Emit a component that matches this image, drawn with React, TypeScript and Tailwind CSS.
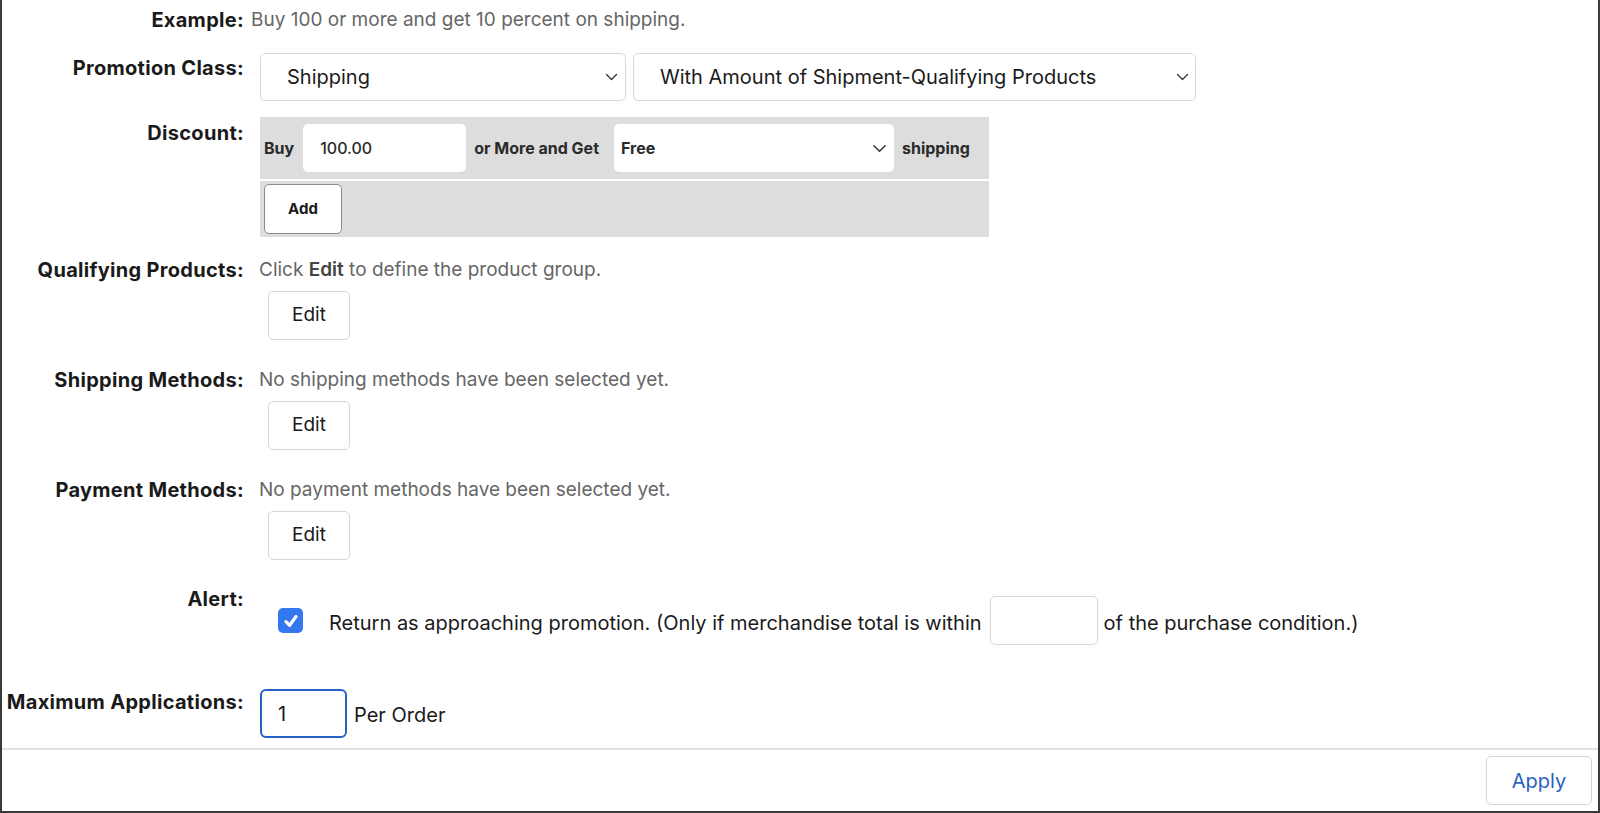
import React from 'react';

const font = { fontFamily: 'Inter, "Noto Sans", sans-serif' };

function Chevron({ className = '' }: { className?: string }) {
  return (
    <svg viewBox="0 0 12 8" className={className} fill="none" stroke="#333" strokeWidth="1.3">
      <path d="M1 1.5 L6 6.5 L11 1.5" strokeLinecap="round" strokeLinejoin="round" />
    </svg>
  );
}

function Label({ children, className = '' }: { children: React.ReactNode; className?: string }) {
  return (
    <div className={`w-[242px] shrink-0 whitespace-nowrap text-right text-[20px] font-bold leading-6 tracking-[0.3px] text-[#1a1a1a] ${className}`}>
      {children}
    </div>
  );
}

function EditButton() {
  return (
    <button className="mt-[9px] flex h-[49px] w-[82px] items-center justify-center rounded-[5px] border border-[#d6d6d6] bg-white text-[19px] text-[#1a1a1a]">
      Edit
    </button>
  );
}

export default function App() {
  return (
    <div style={font} className="flex h-[813px] w-full flex-col border-x-2 border-b-2 border-[#3a3a3a] bg-white">
      <div className="flex-1">
        {/* Example */}
        <div className="flex items-start pt-[8px]">
          <Label>Example:</Label>
          <div className="ml-[7px] text-[19px] leading-6 text-[#666]">
            Buy 100 or more and get 10 percent on shipping.
          </div>
        </div>

        {/* Promotion class */}
        <div className="mt-[21px] flex items-start">
          <Label className="pt-[3px]">Promotion Class:</Label>
          <div className="ml-[16px] flex gap-[7px]">
            <div className="flex h-[48px] w-[366px] items-center justify-between rounded-[5px] border border-[#d8d8d8] bg-white pl-[26px] pr-[7px] text-[20px] text-[#1a1a1a]">
              <span>Shipping</span>
              <Chevron className="h-[8px] w-[13px]" />
            </div>
            <div className="flex h-[48px] w-[563px] items-center justify-between rounded-[5px] border border-[#d8d8d8] bg-white pl-[26px] pr-[6px] text-[20px] text-[#1a1a1a]">
              <span>With Amount of Shipment-Qualifying Products</span>
              <Chevron className="h-[8px] w-[13px]" />
            </div>
          </div>
        </div>

        {/* Discount */}
        <div className="mt-[16px] flex items-start">
          <Label className="pt-[4px]">Discount:</Label>
          <div className="ml-[16px] w-[729px] bg-[#dddddd] text-[16px] font-bold text-[#2a2a2a]">
            <div className="flex h-[64px] items-center border-b-2 border-white pl-[4px]">
              <span>Buy</span>
              <div className="ml-[9px] flex h-[48px] w-[163px] items-center rounded-[5px] bg-white pl-[17px] font-medium">
                100.00
              </div>
              <span className="ml-[8px]">or More and Get</span>
              <div className="ml-[15px] flex h-[48px] w-[280px] items-center justify-between rounded-[5px] bg-white pl-[7px] pr-[7px]">
                <span>Free</span>
                <Chevron className="h-[9px] w-[15px]" />
              </div>
              <span className="ml-[8px]">shipping</span>
            </div>
            <div className="flex h-[56px] items-center pl-[4px]">
              <button className="flex h-[50px] w-[78px] items-center justify-center rounded-[5px] border border-[#8a8a8a] bg-white text-[15px] font-bold text-[#1a1a1a]">
                Add
              </button>
            </div>
          </div>
        </div>

        {/* Qualifying products */}
        <div className="mt-[21px] flex items-start">
          <Label>Qualifying Products:</Label>
          <div className="ml-[15px] flex flex-col items-start">
            <div className="text-[19px] leading-6 text-[#666]">
              Click <span className="font-semibold text-[#444]">Edit</span> to define the product group.
            </div>
            <div className="ml-[9px]">
              <EditButton />
            </div>
          </div>
        </div>

        {/* Shipping methods */}
        <div className="mt-[28px] flex items-start">
          <Label>Shipping Methods:</Label>
          <div className="ml-[15px] flex flex-col items-start">
            <div className="text-[19px] leading-6 text-[#666]">No shipping methods have been selected yet.</div>
            <div className="ml-[9px]">
              <EditButton />
            </div>
          </div>
        </div>

        {/* Payment methods */}
        <div className="mt-[28px] flex items-start">
          <Label>Payment Methods:</Label>
          <div className="ml-[15px] flex flex-col items-start">
            <div className="text-[19px] leading-6 text-[#666]">No payment methods have been selected yet.</div>
            <div className="ml-[9px]">
              <EditButton />
            </div>
          </div>
        </div>

        {/* Alert */}
        <div className="mt-[27px] flex items-start">
          <Label>Alert:</Label>
          <div className="ml-[16px] mt-[9px] flex items-center text-[20px] text-[#1a1a1a]">
            <div className="ml-[18px] flex h-[25px] w-[25px] items-center justify-center rounded-[5px] bg-[#3478f0]">
              <svg viewBox="0 0 16 16" className="h-[18px] w-[18px]" fill="none" stroke="white" strokeWidth="2.8">
                <path d="M3.5 8.5 L6.8 11.8 L12.5 4" strokeLinecap="round" strokeLinejoin="round" />
              </svg>
            </div>
            <span className="ml-[26px] pt-[4px]">
              Return as approaching promotion. (Only if merchandise total is within
            </span>
            <div className="ml-[8px] h-[49px] w-[108px] rounded-[5px] border border-[#d8d8d8] bg-white" />
            <span className="ml-[6px] pt-[4px]">of the purchase condition.)</span>
          </div>
        </div>

        {/* Maximum applications */}
        <div className="mt-[44px] flex items-start">
          <Label className="pt-[1px]">Maximum Applications:</Label>
          <div className="ml-[16px] flex items-center text-[20px] text-[#1a1a1a]">
            <div className="flex h-[49px] w-[87px] items-center rounded-[6px] border-2 border-[#2462c6] bg-white pl-[16px]">
              1
            </div>
            <span className="ml-[7px] pt-[2px]">Per Order</span>
          </div>
        </div>
      </div>

      {/* Footer */}
      <div className="flex h-[63px] justify-end border-t-2 border-[#e2e2e2] pr-[6px] pt-[6px]">
        <button className="flex h-[49px] w-[106px] items-center justify-center rounded-[5px] border border-[#d6d6d6] bg-white text-[20px] text-[#2a62c0]">
          Apply
        </button>
      </div>
    </div>
  );
}
